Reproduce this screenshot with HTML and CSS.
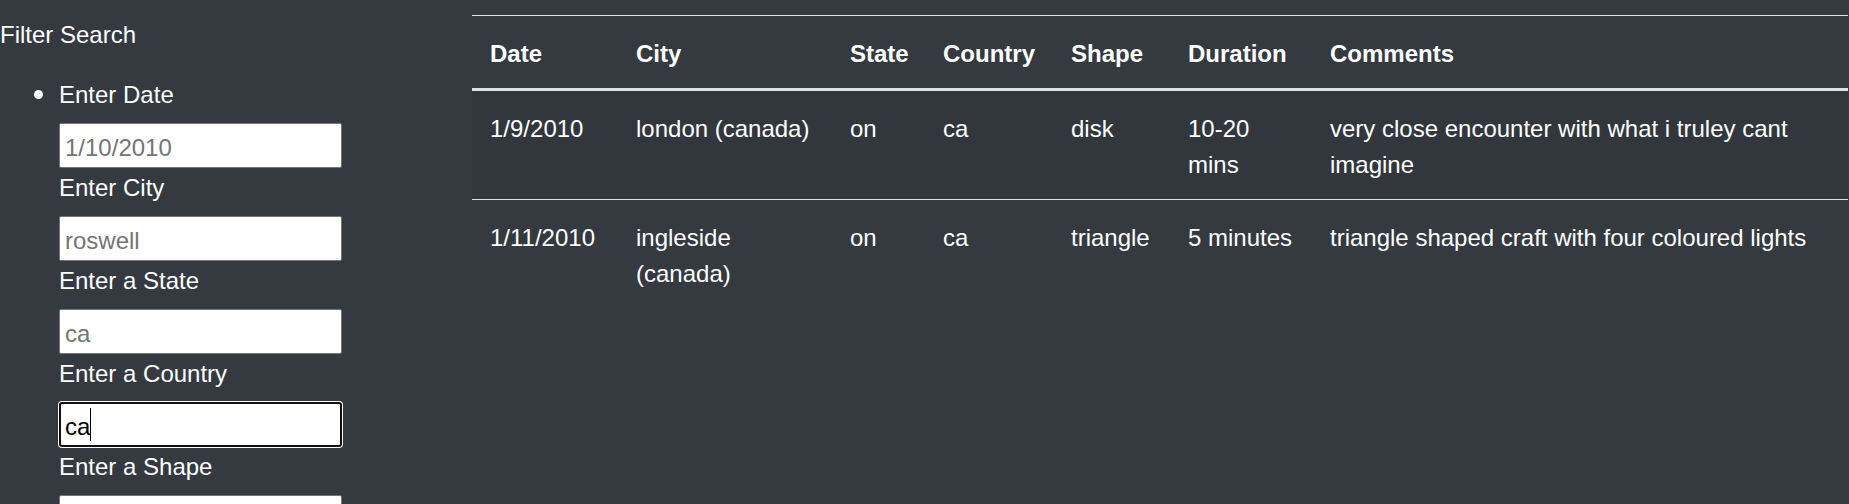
FILE: index.html
```html
<!DOCTYPE html>
<html lang="en">
<head>
<meta charset="utf-8">
<title>UFO Sightings</title>
<link rel="stylesheet" href="styles.css">
</head>
<body>
<div class="page">
  <aside class="sidebar">
    <div class="title">Filter Search</div>
    <ul class="filters">
      <li class="filter-item">
        <label class="flabel" for="datetime">Enter Date</label>
        <input class="finput" id="datetime" type="text" placeholder="1/10/2010">
        <label class="flabel" for="city">Enter City</label>
        <input class="finput" id="city" type="text" placeholder="roswell">
        <label class="flabel" for="state">Enter a State</label>
        <input class="finput" id="state" type="text" placeholder="ca">
        <label class="flabel" for="country">Enter a Country</label>
        <div class="field-wrap">
          <input class="finput focused" id="country" type="text" value="ca">
          <span class="caret"></span>
        </div>
        <label class="flabel" for="shape">Enter a Shape</label>
        <input class="finput" id="shape" type="text">
      </li>
    </ul>
  </aside>
  <main class="results">
    <table class="ufo-table">
      <colgroup>
        <col class="c-date">
        <col class="c-city">
        <col class="c-state">
        <col class="c-country">
        <col class="c-shape">
        <col class="c-duration">
        <col class="c-comments">
      </colgroup>
      <thead>
        <tr>
          <th>Date</th>
          <th>City</th>
          <th>State</th>
          <th>Country</th>
          <th>Shape</th>
          <th>Duration</th>
          <th>Comments</th>
        </tr>
      </thead>
      <tbody>
        <tr>
          <td>1/9/2010</td>
          <td>london (canada)</td>
          <td>on</td>
          <td>ca</td>
          <td>disk</td>
          <td>10-20 mins</td>
          <td>very close encounter with what i truley cant imagine</td>
        </tr>
        <tr>
          <td>1/11/2010</td>
          <td>ingleside (canada)</td>
          <td>on</td>
          <td>ca</td>
          <td>triangle</td>
          <td>5 minutes</td>
          <td>triangle shaped craft with four coloured lights</td>
        </tr>
      </tbody>
    </table>
  </main>
</div>
</body>
</html>
```

FILE: styles.css
```css
html, body {
  margin: 0;
  padding: 0;
  background: #343a40;
  overflow: hidden;
}

body {
  font-family: "Liberation Sans", Arial, sans-serif;
  font-size: 24px;
  line-height: 36px;
  color: #fff;
}

.page {
  display: grid;
  grid-template-columns: 472px 1376px;
  align-items: start;
  padding-top: 15px;
}

.title {
  padding-top: 2px;
  margin-bottom: 22px;
}

.filters {
  margin: 0;
  padding-left: 59px;
  list-style: disc;
}

.filter-item {
  display: list-item;
}

.filter-item::marker {
  font-size: 31px;
}

.flabel {
  display: block;
  width: max-content;
  padding-top: 2px;
  margin-bottom: 10px;
}

.finput {
  display: block;
  box-sizing: border-box;
  width: 283px;
  height: 45px;
  margin: 0;
  padding: 4px 5px 0;
  border: 1px solid #767676;
  border-radius: 2px;
  background: #fff;
  color: #000;
  font-family: inherit;
  font-size: 24px;
  line-height: 36px;
}

.finput::placeholder {
  color: #757575;
  opacity: 1;
}

.field-wrap {
  position: relative;
  width: 283px;
}

.focused {
  border: 2px solid #101010;
  border-radius: 3px;
  padding-left: 4px;
  box-shadow: 0 0 0 1px #fff;
  outline: none;
  caret-color: transparent;
}

.caret {
  position: absolute;
  left: 31px;
  top: 6px;
  width: 1px;
  height: 33px;
  background: #000;
}

.ufo-table {
  width: 1376px;
  table-layout: fixed;
  border-collapse: separate;
  border-spacing: 0;
  color: #fff;
}

.c-date { width: 146px; }
.c-city { width: 214px; }
.c-state { width: 93px; }
.c-country { width: 128px; }
.c-shape { width: 117px; }
.c-duration { width: 142px; }
.c-comments { width: 536px; }

.ufo-table th,
.ufo-table td {
  padding: 20px 18px 16px;
  text-align: left;
  vertical-align: top;
}

.ufo-table th {
  font-weight: bold;
  border-top: 1px solid #dee2e6;
  border-bottom: 3px solid #dee2e6;
}

.ufo-table tbody tr:nth-child(odd) {
  background: #32373d;
}

.ufo-table tbody tr + tr td {
  border-top: 1px solid #dee2e6;
}
```
